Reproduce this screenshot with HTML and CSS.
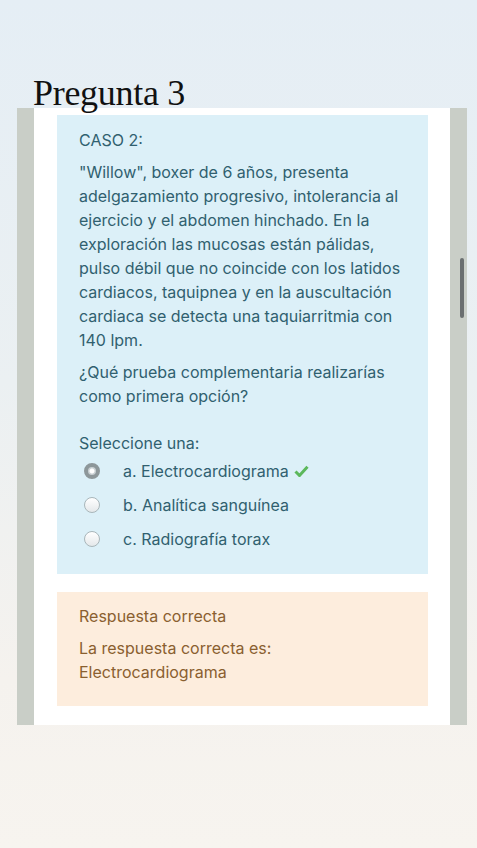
FILE: index.html
```html
<!DOCTYPE html>
<html lang="es">
<head>
<meta charset="utf-8">
<title>Pregunta 3</title>
<link rel="stylesheet" href="styles.css">
</head>
<body>
<div class="page">
  <h1 class="title">Pregunta 3</h1>
  <div class="frame">
    <div class="qtext">
      <p class="line">CASO 2:</p>
      <p class="para">"Willow", boxer de 6 años, presenta adelgazamiento progresivo, intolerancia al ejercicio y el abdomen hinchado. En la exploración las mucosas están pálidas, pulso débil que no coincide con los latidos cardiacos, taquipnea y en la auscultación cardiaca se detecta una taquiarritmia con 140 lpm.</p>
      <p class="para">¿Qué prueba complementaria realizarías como primera opción?</p>
      <p class="prompt">Seleccione una:</p>
      <div class="options">
        <div class="opt">
          <span class="radio checked"></span>
          <span class="label">a. Electrocardiograma</span>
          <svg class="check" width="15" height="12" viewBox="0 0 15 12"><path d="M1.5 6.5 L5.5 10.5 L13.5 1.8" fill="none" stroke="#5cb85c" stroke-width="3" stroke-linejoin="miter"/></svg>
        </div>
        <div class="opt">
          <span class="radio"></span>
          <span class="label">b. Analítica sanguínea</span>
        </div>
        <div class="opt">
          <span class="radio"></span>
          <span class="label">c. Radiografía torax</span>
        </div>
      </div>
    </div>
    <div class="feedback">
      <p class="line">Respuesta correcta</p>
      <p class="para">La respuesta correcta es: <br>Electrocardiograma</p>
    </div>
    <div class="scrollbar"></div>
  </div>
</div>
</body>
</html>
```
FILE: styles.css
```css
html, body {
  margin: 0;
  padding: 0;
}
body {
  min-height: 848px;
  background: linear-gradient(180deg, #e5eef5 0%, #ebf0f2 45%, #f5f2ee 80%, #f7f4ef 100%);
  font-family: "Inter", "Liberation Sans", sans-serif;
}
.page {
  padding-top: 75px;
  padding-bottom: 124px;
}
.title {
  position: relative;
  z-index: 2;
  margin: 0 0 -3px 33px;
  font-family: "Liberation Serif", serif;
  font-weight: normal;
  font-size: 36px;
  line-height: 36px;
  color: #111;
  letter-spacing: -0.3px;
}
.frame {
  position: relative;
  box-sizing: border-box;
  width: 450px;
  margin-left: 17px;
  background: #fff;
  border-left: 17px solid #c9cec7;
  border-right: 17px solid #c9cec7;
  padding: 7px 22px 19px 23px;
}
.qtext {
  background: #dcf0f8;
  color: #30606f;
  padding: 13px 20px 23px 22px;
  font-size: 16px;
  line-height: 24px;
}
p {
  margin: 0;
}
.para {
  margin-top: 8px;
}
.prompt {
  margin-top: 23px;
}
.options {
  display: flex;
  flex-direction: column;
  gap: 10px;
  margin-top: 4px;
}
.opt {
  display: flex;
  align-items: center;
  height: 24px;
}
.radio {
  box-sizing: border-box;
  width: 16px;
  height: 16px;
  border-radius: 50%;
  margin-left: 5px;
  margin-right: 23px;
  border: 1px solid #a9b6ba;
  background: linear-gradient(180deg, #ffffff 0%, #e4e8ea 100%);
}
.radio.checked {
  border: 4px solid #8d979a;
  background: radial-gradient(circle, #ffffff 0 2px, #c9d0d3 3px);
}
.check {
  margin-left: 5px;
}
.feedback {
  margin-top: 18px;
  background: #fdeddd;
  color: #8a5f30;
  padding: 12px 22px 22px 22px;
  font-size: 16px;
  line-height: 24px;
}
.scrollbar {
  position: absolute;
  right: -14px;
  top: 150px;
  width: 4px;
  height: 60px;
  border-radius: 2px;
  background: #6a6f70;
}
```
